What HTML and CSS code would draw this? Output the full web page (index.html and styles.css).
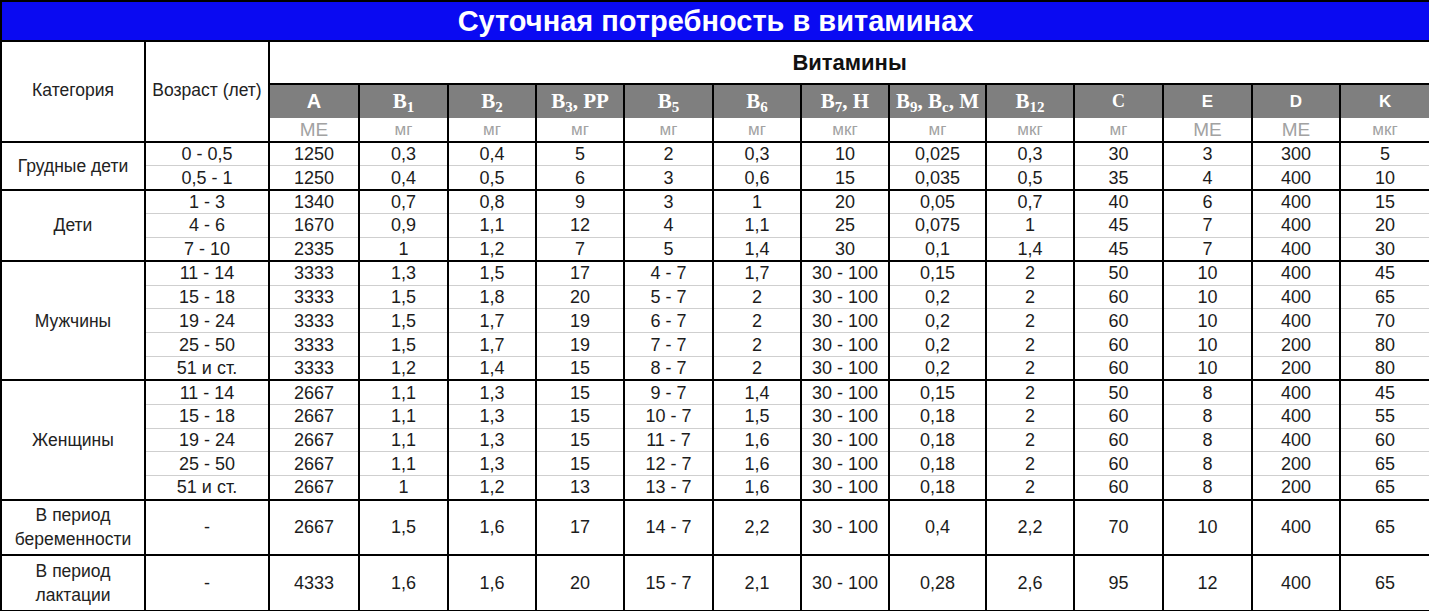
FILE: index.html
```html
<!DOCTYPE html>
<html lang="ru">
<head>
<meta charset="utf-8">
<title>Суточная потребность в витаминах</title>
<link rel="stylesheet" href="styles.css">
</head>
<body>
<table class="vt">
<colgroup>
<col class="c-cat"><col class="c-age"><col class="c-90"><col class="c-89"><col class="c-88"><col class="c-88"><col class="c-89"><col class="c-88"><col class="c-88"><col class="c-97"><col class="c-88"><col class="c-89"><col class="c-89"><col class="c-88"><col class="c-90">
</colgroup>
<thead>
<tr class="r-title"><th colspan="15" class="title">Суточная потребность в витаминах</th></tr>
<tr class="r-vit">
<th rowspan="3" class="lbl">Категория</th>
<th rowspan="3" class="lbl">Возраст (лет)</th>
<th colspan="13" class="vit">Витамины</th>
</tr>
<tr class="r-names">
<th class="nm sans">A</th>
<th class="nm">B<sub>1</sub></th>
<th class="nm">B<sub>2</sub></th>
<th class="nm">B<sub>3</sub>, PP</th>
<th class="nm">B<sub>5</sub></th>
<th class="nm">B<sub>6</sub></th>
<th class="nm">B<sub>7</sub>, H</th>
<th class="nm">B<sub>9</sub>, B<sub>c</sub>, M</th>
<th class="nm">B<sub>12</sub></th>
<th class="nm small">C</th>
<th class="nm sans-n">E</th>
<th class="nm sans-n">D</th>
<th class="nm sans-n">K</th>
</tr>
<tr class="r-units">
<td class="u big">МЕ</td><td class="u">мг</td><td class="u">мг</td><td class="u">мг</td><td class="u">мг</td><td class="u">мг</td><td class="u">мкг</td><td class="u">мг</td><td class="u">мкг</td><td class="u">мг</td><td class="u big">МЕ</td><td class="u big">МЕ</td><td class="u">мкг</td>
</tr>
</thead>
<tbody>
<tr class="g"><td rowspan="2" class="cat">Грудные дети</td><td>0 - 0,5</td><td>1250</td><td>0,3</td><td>0,4</td><td>5</td><td>2</td><td>0,3</td><td>10</td><td>0,025</td><td>0,3</td><td>30</td><td>3</td><td>300</td><td>5</td></tr>
<tr><td>0,5 - 1</td><td>1250</td><td>0,4</td><td>0,5</td><td>6</td><td>3</td><td>0,6</td><td>15</td><td>0,035</td><td>0,5</td><td>35</td><td>4</td><td>400</td><td>10</td></tr>

<tr class="g"><td rowspan="3" class="cat">Дети</td><td>1 - 3</td><td>1340</td><td>0,7</td><td>0,8</td><td>9</td><td>3</td><td>1</td><td>20</td><td>0,05</td><td>0,7</td><td>40</td><td>6</td><td>400</td><td>15</td></tr>
<tr><td>4 - 6</td><td>1670</td><td>0,9</td><td>1,1</td><td>12</td><td>4</td><td>1,1</td><td>25</td><td>0,075</td><td>1</td><td>45</td><td>7</td><td>400</td><td>20</td></tr>
<tr><td>7 - 10</td><td>2335</td><td>1</td><td>1,2</td><td>7</td><td>5</td><td>1,4</td><td>30</td><td>0,1</td><td>1,4</td><td>45</td><td>7</td><td>400</td><td>30</td></tr>

<tr class="g"><td rowspan="5" class="cat">Мужчины</td><td>11 - 14</td><td>3333</td><td>1,3</td><td>1,5</td><td>17</td><td>4 - 7</td><td>1,7</td><td>30 - 100</td><td>0,15</td><td>2</td><td>50</td><td>10</td><td>400</td><td>45</td></tr>
<tr><td>15 - 18</td><td>3333</td><td>1,5</td><td>1,8</td><td>20</td><td>5 - 7</td><td>2</td><td>30 - 100</td><td>0,2</td><td>2</td><td>60</td><td>10</td><td>400</td><td>65</td></tr>
<tr><td>19 - 24</td><td>3333</td><td>1,5</td><td>1,7</td><td>19</td><td>6 - 7</td><td>2</td><td>30 - 100</td><td>0,2</td><td>2</td><td>60</td><td>10</td><td>400</td><td>70</td></tr>
<tr><td>25 - 50</td><td>3333</td><td>1,5</td><td>1,7</td><td>19</td><td>7 - 7</td><td>2</td><td>30 - 100</td><td>0,2</td><td>2</td><td>60</td><td>10</td><td>200</td><td>80</td></tr>
<tr><td>51 и ст.</td><td>3333</td><td>1,2</td><td>1,4</td><td>15</td><td>8 - 7</td><td>2</td><td>30 - 100</td><td>0,2</td><td>2</td><td>60</td><td>10</td><td>200</td><td>80</td></tr>

<tr class="g"><td rowspan="5" class="cat">Женщины</td><td>11 - 14</td><td>2667</td><td>1,1</td><td>1,3</td><td>15</td><td>9 - 7</td><td>1,4</td><td>30 - 100</td><td>0,15</td><td>2</td><td>50</td><td>8</td><td>400</td><td>45</td></tr>
<tr><td>15 - 18</td><td>2667</td><td>1,1</td><td>1,3</td><td>15</td><td>10 - 7</td><td>1,5</td><td>30 - 100</td><td>0,18</td><td>2</td><td>60</td><td>8</td><td>400</td><td>55</td></tr>
<tr><td>19 - 24</td><td>2667</td><td>1,1</td><td>1,3</td><td>15</td><td>11 - 7</td><td>1,6</td><td>30 - 100</td><td>0,18</td><td>2</td><td>60</td><td>8</td><td>400</td><td>60</td></tr>
<tr><td>25 - 50</td><td>2667</td><td>1,1</td><td>1,3</td><td>15</td><td>12 - 7</td><td>1,6</td><td>30 - 100</td><td>0,18</td><td>2</td><td>60</td><td>8</td><td>200</td><td>65</td></tr>
<tr><td>51 и ст.</td><td>2667</td><td>1</td><td>1,2</td><td>13</td><td>13 - 7</td><td>1,6</td><td>30 - 100</td><td>0,18</td><td>2</td><td>60</td><td>8</td><td>200</td><td>65</td></tr>

<tr class="g tall"><td class="cat">В период<br>беременности</td><td>-</td><td>2667</td><td>1,5</td><td>1,6</td><td>17</td><td>14 - 7</td><td>2,2</td><td>30 - 100</td><td>0,4</td><td>2,2</td><td>70</td><td>10</td><td>400</td><td>65</td></tr>
<tr class="g tall"><td class="cat">В период<br>лактации</td><td>-</td><td>4333</td><td>1,6</td><td>1,6</td><td>20</td><td>15 - 7</td><td>2,1</td><td>30 - 100</td><td>0,28</td><td>2,6</td><td>95</td><td>12</td><td>400</td><td>65</td></tr>
</tbody>
</table>
</body>
</html>
```

FILE: styles.css
```css
html, body {
  margin: 0;
  padding: 0;
  background: #ffffff;
}

.vt {
  width: 1429px;
  table-layout: fixed;
  border-collapse: collapse;
  font-family: "Liberation Sans", Arial, sans-serif;
  color: #1c1c1c;
}

.c-cat { width: 144px; }
.c-age { width: 124px; }
.c-97 { width: 97px; }
.c-90 { width: 90px; }
.c-89 { width: 89px; }
.c-88 { width: 88px; }

.vt th,
.vt td {
  padding: 0;
  text-align: center;
  vertical-align: middle;
  border-left: 2px solid #000;
  border-right: 2px solid #000;
  border-top: 1px solid #cfcfcf;
  border-bottom: 1px solid #cfcfcf;
  white-space: nowrap;
  overflow: hidden;
}

.r-title { height: 40px; }
.title {
  background: #0a0af2;
  color: #ffffff;
  font-size: 29px;
  font-weight: bold;
  line-height: 32px;
  border: 2px solid #000 !important;
}

.r-vit { height: 43px; }
.vit {
  font-size: 22px;
  font-weight: bold;
  color: #111;
  border-top: 2px solid #000 !important;
  border-bottom: 2px solid #000 !important;
}

.lbl {
  font-size: 17.5px;
  font-weight: normal;
  color: #222;
  border-top: 2px solid #000 !important;
  border-bottom: 2px solid #000 !important;
  padding-bottom: 2px !important;
}

.r-names { height: 34px; }
.nm {
  background: #7f7f7f;
  color: #ffffff;
  font-family: "Liberation Serif", "Times New Roman", serif;
  font-weight: bold;
  font-size: 21px;
  border-top: 2px solid #000 !important;
  border-bottom: 0 none !important;
}
.nm sub {
  font-size: 15px;
  vertical-align: -4px;
  line-height: 0;
}
.nm.sans {
  font-family: "Liberation Sans", Arial, sans-serif;
  font-size: 20px;
}
.nm.small {
  font-size: 18px;
}
.nm.sans-n {
  font-family: "Liberation Sans", Arial, sans-serif;
  font-size: 17px;
}

.r-units { height: 24px; }
.u {
  color: #a2a2a2;
  font-size: 17px;
  line-height: 20px;
  border-top: 0 none !important;
  border-bottom: 2px solid #000 !important;
}
.u.big { font-size: 19px; }

tbody tr { height: 23.85px; }
tbody td {
  font-size: 18px;
  line-height: 20px;
}
tbody tr.g td {
  border-top: 2px solid #000;
}
tbody tr.tall { height: 55.5px; }
.cat {
  font-size: 17.5px !important;
  line-height: 24px !important;
  border-top: 2px solid #000 !important;
  border-bottom: 2px solid #000 !important;
  color: #222;
}
tbody tr:last-child td {
  border-bottom: 2px solid #000;
}
```
